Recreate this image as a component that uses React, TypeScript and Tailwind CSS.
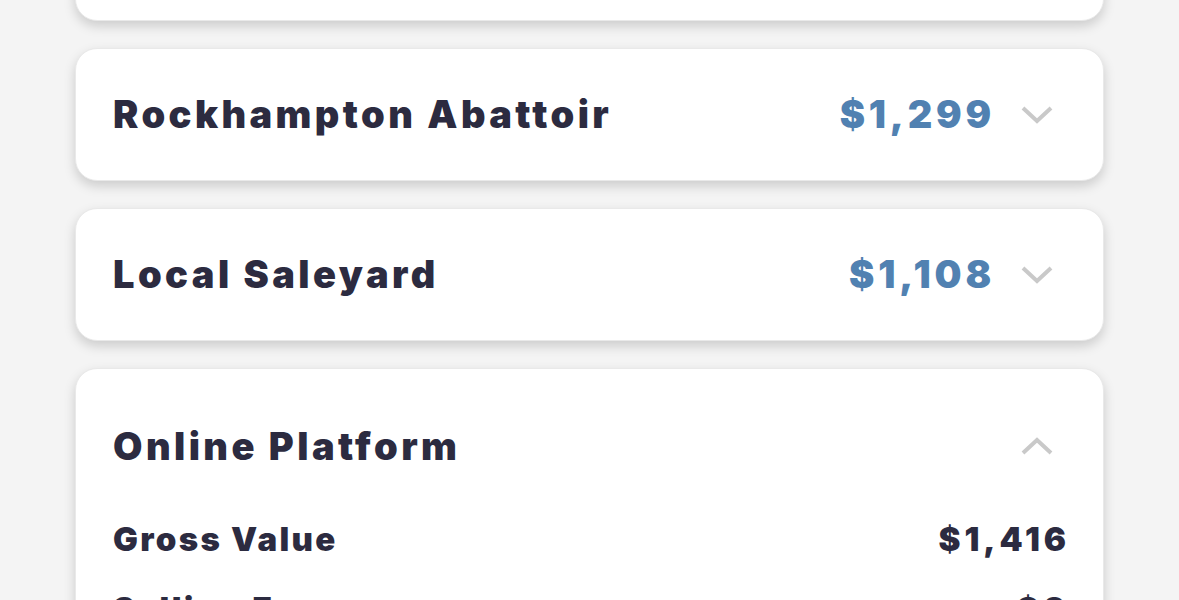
import React from "react";

const rows = [
  { name: "Local Feedlot", price: "$1,351" },
  { name: "Rockhampton Abattoir", price: "$1,299" },
  { name: "Local Saleyard", price: "$1,108" },
];

function Chevron({ up }: { up?: boolean }) {
  return (
    <svg width="34" height="20" viewBox="0 0 34 20" fill="none" className="shrink-0">
      <path
        d={up ? "M3 17 L17 4 L31 17" : "M3 3 L17 16 L31 3"}
        stroke="#c9c9c9"
        strokeWidth="4"
      />
    </svg>
  );
}

export default function App() {
  return (
    <div
      className="min-h-[600px] bg-[#f4f4f4] px-[75px] overflow-hidden text-[#2c2b40]"
      style={{ fontFamily: "Inter, 'Noto Sans', sans-serif" }}
    >
      <div className="flex flex-col gap-[27px]">
        {rows.map((r, i) => (
          <div
            key={r.name}
            className={`h-[133px] rounded-[22px] border border-[#e9e9e9] bg-white shadow-[0_5px_12px_rgba(0,0,0,0.17)] flex items-center pl-[37px] pr-[49px] ${
              i === 0 ? "-mt-[112px]" : ""
            }`}
          >
            <h2 className="flex-1 text-[38px] font-black tracking-[0.09em]">{r.name}</h2>
            <span className="text-[38px] font-black tracking-[0.1em] text-[#5181b1] mr-[25px]">
              {r.price}
            </span>
            <Chevron />
          </div>
        ))}

        <div className="rounded-[22px] border border-[#e9e9e9] bg-white shadow-[0_5px_12px_rgba(0,0,0,0.17)] pl-[37px] pr-[33px] pb-10">
          <div className="h-[154px] flex items-center pr-[16px]">
            <h2 className="flex-1 text-[38px] font-black tracking-[0.09em]">Online Platform</h2>
            <Chevron up />
          </div>
          <div className="flex flex-col gap-[20px] -mt-[8px]">
            <div className="flex justify-between text-[33px] font-black tracking-[0.07em]">
              <span>Gross Value</span>
              <span className="tracking-[0.12em]">$1,416</span>
            </div>
            <div className="flex justify-between text-[33px] font-black tracking-[0.07em]">
              <span>Selling Fees</span>
              <span className="tracking-[0.12em]">$0</span>
            </div>
            <div className="flex justify-between text-[33px] font-black tracking-[0.07em]">
              <span>Net Return</span>
              <span className="tracking-[0.12em]">$1,416</span>
            </div>
          </div>
        </div>
      </div>
    </div>
  );
}
